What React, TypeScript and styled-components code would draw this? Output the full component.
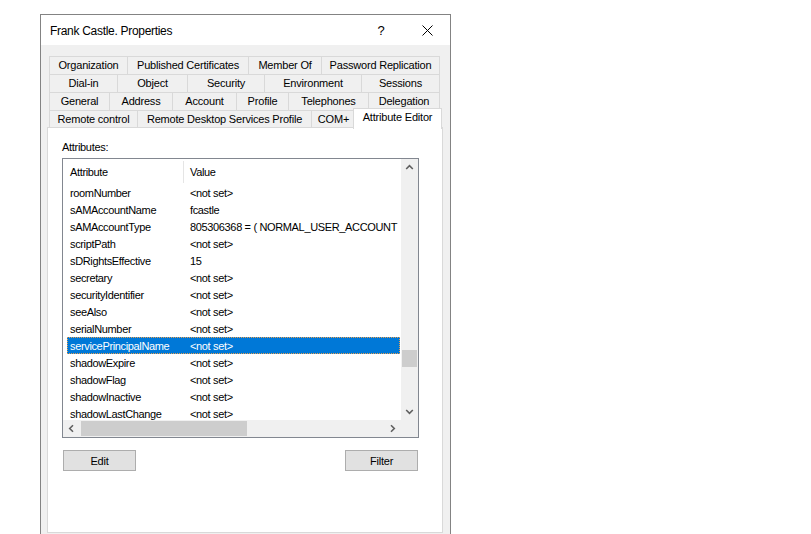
import React from "react";
import styled, { createGlobalStyle } from "styled-components";

const GlobalStyle = createGlobalStyle`
  html, body { margin: 0; padding: 0; background: #fff; }
  body { font-family: "Liberation Sans", Arial, sans-serif; color: #000; }
  * { box-sizing: border-box; }
`;

const Page = styled.div`
  padding: 14px 0 0 40px;
  height: 534px;
  overflow: hidden;
`;

const Window = styled.div`
  width: 411px;
  height: 530px;
  border: 1px solid #838383;
  background: #f0f0f0;
  display: flex;
  flex-direction: column;
`;

const TitleBar = styled.div`
  height: 30px;
  flex-shrink: 0;
  background: #fff;
  display: flex;
  align-items: center;
  padding-left: 9px;
`;

const Title = styled.div`
  flex: 1;
  font-size: 12px;
  letter-spacing: -0.3px;
  padding-top: 1px;
`;

const TitleButton = styled.div`
  width: 46px;
  height: 30px;
  display: flex;
  align-items: center;
  justify-content: center;
  font-size: 13px;
  padding-top: 1px;
`;

const Body = styled.div`
  flex: 1;
  padding: 11px 7px 0 6px;
  display: flex;
  flex-direction: column;
`;

const TabStrip = styled.div`
  margin-left: 2px;
  margin-bottom: -1px;
  display: flex;
  flex-direction: column;
`;

const TabRow = styled.div`
  display: flex;
  align-items: flex-start;
  height: 18px;
`;

const Tab = styled.div<{ $w: number; $selected?: boolean }>`
  width: ${(p) => p.$w}px;
  height: 18px;
  margin-left: -1px;
  &:first-child { margin-left: 0; }
  border: 1px solid #d9d9d9;
  border-bottom: none;
  background: #f0f0f0;
  font-size: 11px;
  letter-spacing: -0.2px;
  line-height: 16px;
  text-align: center;
  white-space: nowrap;
  ${(p) =>
    p.$selected &&
    `
    position: relative;
    z-index: 2;
    top: -2px;
    height: 21px;
    width: ${p.$w + 4}px;
    margin-left: -3px;
    background: #fff;
    line-height: 17px;
  `}
`;

const Panel = styled.div`
  position: relative;
  z-index: 1;
  height: 406px;
  background: #fff;
  border: 1px solid #d9d9d9;
  padding: 13px 0 0 14px;
`;

const Label = styled.div`
  font-size: 11px;
  letter-spacing: -0.3px;
  line-height: 13px;
`;

const ListBox = styled.div`
  margin-top: 4px;
  width: 357px;
  height: 280px;
  border: 1px solid #828790;
  display: grid;
  grid-template-columns: 338px 17px;
  grid-template-rows: 261px 17px;
`;

const ListContent = styled.div`
  overflow: hidden;
  font-size: 11px;
  letter-spacing: -0.35px;
`;

const Header = styled.div`
  height: 25px;
  display: flex;
`;

const HeaderCell = styled.div<{ $w?: number }>`
  ${(p) => (p.$w ? `width: ${p.$w}px; border-right: 1px solid #e5e5e5;` : "flex: 1;")}
  margin-top: 2px;
  height: 22px;
  display: flex;
  align-items: center;
  padding-left: ${(p) => (p.$w ? 7 : 6)}px;
  padding-bottom: 1px;
`;

const Row = styled.div<{ $selected?: boolean }>`
  height: 17px;
  width: 333px;
  margin-left: 4px;
  display: flex;
  align-items: center;
  white-space: nowrap;
  ${(p) =>
    p.$selected &&
    `
    background: #0078d7;
    color: #fff;
    outline: 1px dotted #e8a050;
    outline-offset: -1px;
  `}
`;

const AttrCell = styled.div`
  width: 117px;
  flex-shrink: 0;
  padding-left: 3px;
  overflow: hidden;
`;

const ValueCell = styled.div`
  flex: 1;
  padding-left: 6px;
  overflow: hidden;
`;

const VScroll = styled.div`
  background: #f0f0f0;
  display: flex;
  flex-direction: column;
`;

const HScroll = styled.div`
  background: #f0f0f0;
  display: flex;
`;

const Corner = styled.div`
  background: #f0f0f0;
`;

const ArrowBox = styled.div`
  width: 17px;
  height: 17px;
  flex-shrink: 0;
  display: flex;
  align-items: center;
  justify-content: center;
`;

const VTrack = styled.div`
  flex: 1;
  display: flex;
  flex-direction: column;
`;

const HTrack = styled.div`
  flex: 1;
  display: flex;
`;

const VThumb = styled.div`
  width: 15px;
  height: 17px;
  margin-left: 1px;
  background: #cdcdcd;
`;

const HThumb = styled.div`
  height: 15px;
  margin-top: 1px;
  background: #cdcdcd;
`;

const ButtonRow = styled.div`
  margin-top: 12px;
  width: 357px;
  padding: 0 1px;
  display: flex;
  justify-content: space-between;
`;

const Button = styled.button`
  width: 73px;
  height: 21px;
  padding: 0;
  background: #e1e1e1;
  border: 1px solid #adadad;
  font-family: "Liberation Sans", Arial, sans-serif;
  font-size: 11px;
  letter-spacing: -0.2px;
  color: #000;
`;

const Chevron = ({ dir }: { dir: "up" | "down" | "left" | "right" }) => {
  const rot = { up: 0, right: 90, down: 180, left: 270 }[dir];
  return (
    <svg width="9" height="9" viewBox="0 0 9 9">
      <polyline
        points="1.2,6 4.5,2.7 7.8,6"
        fill="none"
        stroke="#606060"
        strokeWidth="1.6"
        transform={`rotate(${rot} 4.5 4.5)`}
      />
    </svg>
  );
};

const tabRows: { label: string; w: number; selected?: boolean }[][] = [
  [
    { label: "Organization", w: 79 },
    { label: "Published Certificates", w: 122 },
    { label: "Member Of", w: 74 },
    { label: "Password Replication", w: 119 },
  ],
  [
    { label: "Dial-in", w: 69 },
    { label: "Object", w: 71 },
    { label: "Security", w: 78 },
    { label: "Environment", w: 98 },
    { label: "Sessions", w: 79 },
  ],
  [
    { label: "General", w: 61 },
    { label: "Address", w: 64 },
    { label: "Account", w: 65 },
    { label: "Profile", w: 53 },
    { label: "Telephones", w: 81 },
    { label: "Delegation", w: 72 },
  ],
  [
    { label: "Remote control", w: 89 },
    { label: "Remote Desktop Services Profile", w: 175 },
    { label: "COM+", w: 45 },
    { label: "Attribute Editor", w: 85, selected: true },
  ],
];

const attrs: [string, string][] = [
  ["roomNumber", "<not set>"],
  ["sAMAccountName", "fcastle"],
  ["sAMAccountType", "805306368 = ( NORMAL_USER_ACCOUNT"],
  ["scriptPath", "<not set>"],
  ["sDRightsEffective", "15"],
  ["secretary", "<not set>"],
  ["securityIdentifier", "<not set>"],
  ["seeAlso", "<not set>"],
  ["serialNumber", "<not set>"],
  ["servicePrincipalName", "<not set>"],
  ["shadowExpire", "<not set>"],
  ["shadowFlag", "<not set>"],
  ["shadowInactive", "<not set>"],
  ["shadowLastChange", "<not set>"],
];

const SELECTED = 9;
const V_THUMB_OFFSET = 174;
const H_THUMB = { offset: 1, width: 166 };

export default function App() {
  return (
    <>
      <GlobalStyle />
      <Page>
        <Window>
          <TitleBar>
            <Title>Frank Castle. Properties</Title>
            <TitleButton>?</TitleButton>
            <TitleButton>
              <svg width="11" height="11" viewBox="0 0 11 11">
                <path d="M0.5 0.5 L10.5 10.5 M10.5 0.5 L0.5 10.5" stroke="#000" strokeWidth="1" />
              </svg>
            </TitleButton>
          </TitleBar>
          <Body>
            <TabStrip>
              {tabRows.map((row, i) => (
                <TabRow key={i}>
                  {row.map((t) => (
                    <Tab key={t.label} $w={t.w} $selected={t.selected}>
                      {t.label}
                    </Tab>
                  ))}
                </TabRow>
              ))}
            </TabStrip>
            <Panel>
              <Label>Attributes:</Label>
              <ListBox>
                <ListContent>
                  <Header>
                    <HeaderCell $w={121}>Attribute</HeaderCell>
                    <HeaderCell>Value</HeaderCell>
                  </Header>
                  {attrs.map(([a, v], i) => (
                    <Row key={a} $selected={i === SELECTED}>
                      <AttrCell>{a}</AttrCell>
                      <ValueCell>{v}</ValueCell>
                    </Row>
                  ))}
                </ListContent>
                <VScroll>
                  <ArrowBox>
                    <Chevron dir="up" />
                  </ArrowBox>
                  <VTrack>
                    <VThumb style={{ marginTop: V_THUMB_OFFSET }} />
                  </VTrack>
                  <ArrowBox>
                    <Chevron dir="down" />
                  </ArrowBox>
                </VScroll>
                <HScroll>
                  <ArrowBox>
                    <Chevron dir="left" />
                  </ArrowBox>
                  <HTrack>
                    <HThumb style={{ marginLeft: H_THUMB.offset, width: H_THUMB.width }} />
                  </HTrack>
                  <ArrowBox>
                    <Chevron dir="right" />
                  </ArrowBox>
                </HScroll>
                <Corner />
              </ListBox>
              <ButtonRow>
                <Button>Edit</Button>
                <Button>Filter</Button>
              </ButtonRow>
            </Panel>
          </Body>
        </Window>
      </Page>
    </>
  );
}
